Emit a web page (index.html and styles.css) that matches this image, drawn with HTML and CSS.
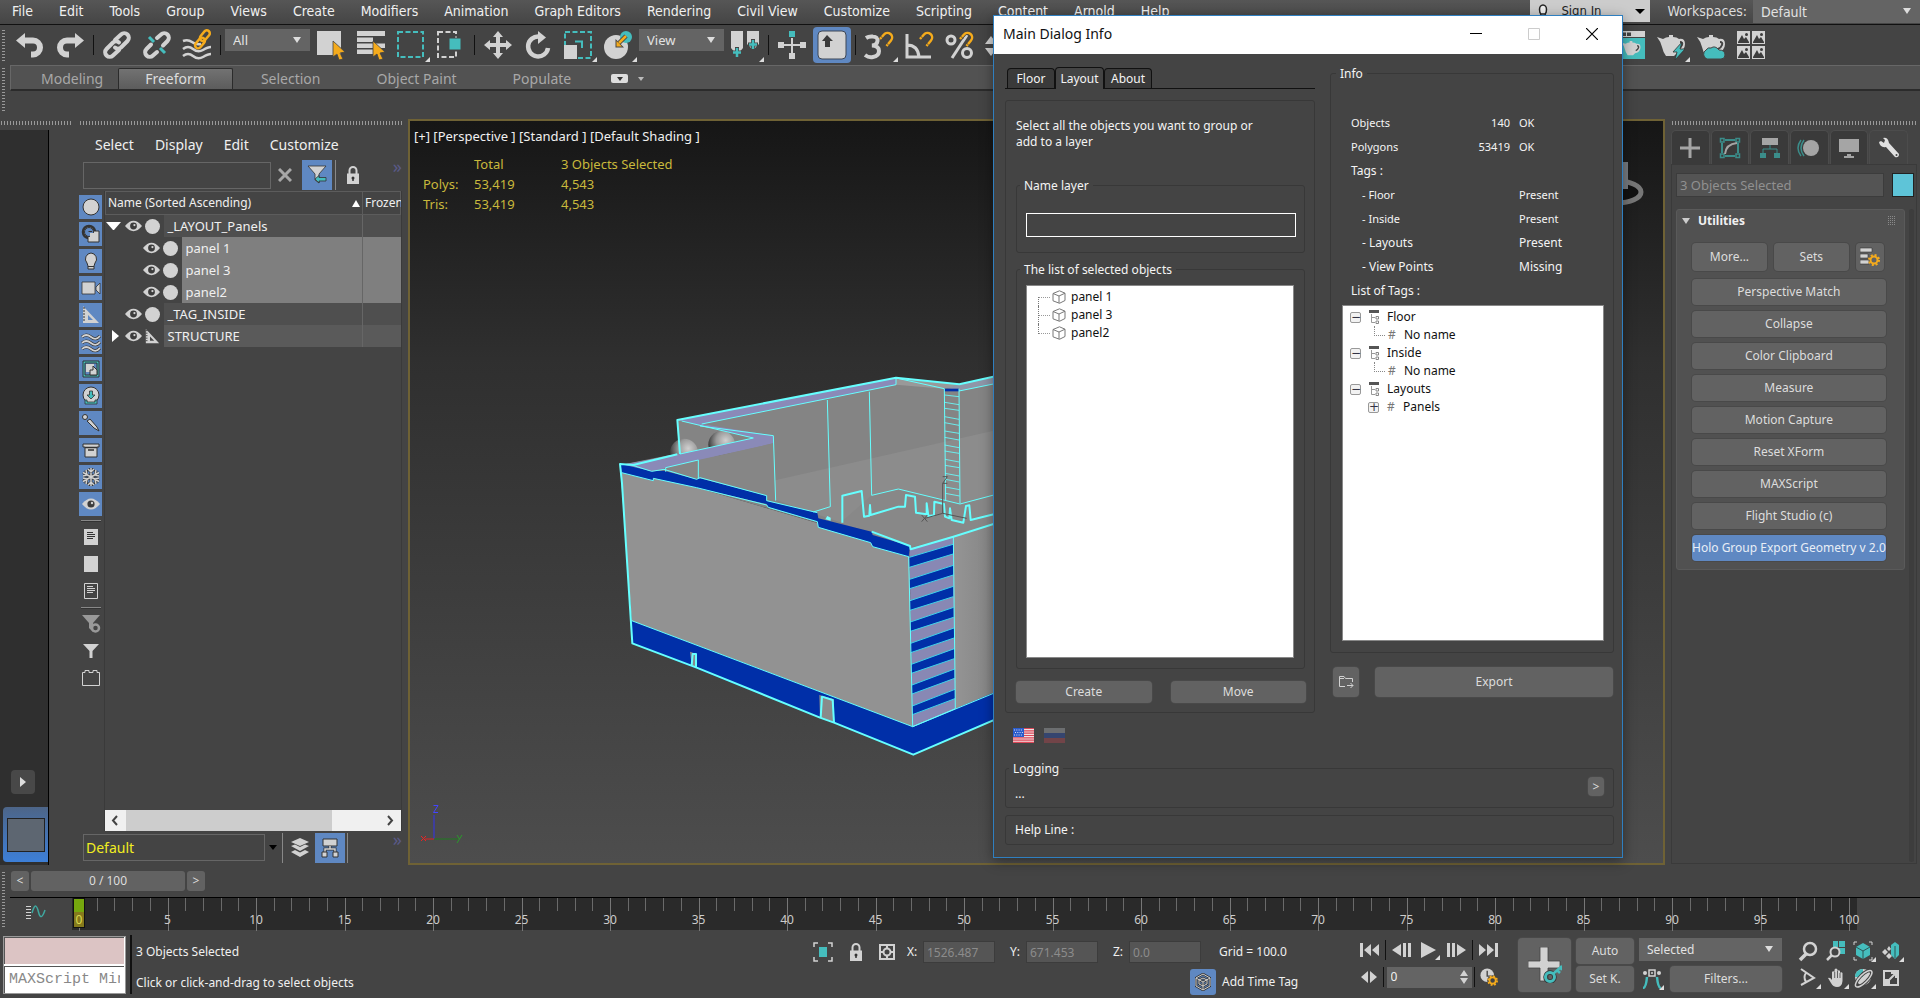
FILE: index.html
```html
<!DOCTYPE html>
<html lang="en">
<head>
<meta charset="utf-8">
<title>3D Scene Editor</title>
<link rel="stylesheet" href="styles.css">
</head>
<body>
<svg class="defs" aria-hidden="true">
  <defs>
    <symbol id="eye" viewBox="0 0 18 12"><path d="M0 6Q9-5 18 6Q9 17 0 6Z" fill="#d2d2d2"/><circle cx="9" cy="6" r="3.6" fill="#3c3c3c"/><circle cx="10" cy="5" r="1.2" fill="#d2d2d2"/></symbol>
    <symbol id="disc" viewBox="0 0 14 14"><circle cx="7" cy="7" r="7" fill="#d2d2d2"/></symbol>
    <symbol id="ruler" viewBox="0 0 18 18"><path fill-rule="evenodd" d="M1 0L17 17H1ZM6 9V14H11Z" fill="#d2d2d2"/><path d="M1 2H3M1 5H3M1 8H3M1 11H3M1 14H3" stroke="#333"/></symbol>
    <symbol id="cube" viewBox="0 0 14 14"><path d="M1 3.500L7.500 .8L13 3.200V10.500L7.500 13.300L1 10.800ZM1 3.500L7 6L13 3.200M7 6V13" fill="none" stroke="#777"/></symbol>
    <symbol id="tag" viewBox="0 0 12 14"><path d="M1 0H11V3H1Z" fill="#555"/><path d="M3.500 4V12.500H7M3.500 7.500H7" fill="none" stroke="#999"/><path d="M8 6.500H10.500V9H8ZM8 11H10.500V13.500H8Z" fill="none" stroke="#888"/></symbol>
    <symbol id="teapot" viewBox="0 0 28 28"><path d="M0 5L6 7Q9 5 12 5V3H16V5Q20 5 22 7Q28 6 28 12Q28 19 20 21L17 24H9Q6 20 5 15Q4 10 0 5Z" fill="#d2d2d2"/><path d="M23 10Q26 10 25 13T21 17" fill="none" stroke="#444" stroke-width="2"/></symbol>
    <symbol id="pic" viewBox="0 0 13 13"><path d="M0 0H13V13H0Z" fill="#d2d2d2"/><path d="M1 11L5 4L7 8L9 6L12 11V12H1Z" fill="#3c3c3c"/><circle cx="9.500" cy="3.500" r="1.500" fill="#3c3c3c"/></symbol>
    <symbol id="lock" viewBox="0 0 12 18"><path d="M2.500 8V4.500a3.500 3.500 0 0 1 7 0V8" fill="none" stroke="#d2d2d2" stroke-width="2"/><path d="M0 7.500H12V18H0Z" fill="#d2d2d2"/><circle cx="6" cy="12" r="1.500" fill="#333"/><path d="M6 12V15" stroke="#333" stroke-width="1.500"/></symbol>
    <symbol id="magnet" viewBox="0 0 16 16"><path d="M2 8L6 3.500a4.500 4.500 0 0 1 7 6L8.500 15" fill="none" stroke="#444" stroke-width="4"/><path d="M2 8L6 3.500a4.500 4.500 0 0 1 7 6L8.500 15" fill="none" stroke="#f5ab1c" stroke-width="2.500"/><path d="M2.500 5L5.500 8M8 11.500L11 14.500" stroke="#444" stroke-width=".8"/></symbol>
    <symbol id="gear" viewBox="0 0 12 12"><circle cx="6" cy="6" r="3.500" fill="none" stroke="#f5ab1c" stroke-width="2"/><circle cx="6" cy="6" r="5" fill="none" stroke="#f5ab1c" stroke-width="2" stroke-dasharray="2 1.930"/></symbol>
  </defs>
</svg>

<header class="menubar">
  <nav class="menus">
    <button>File</button><button>Edit</button><button>Tools</button><button>Group</button><button>Views</button><button>Create</button><button>Modifiers</button><button>Animation</button><button>Graph Editors</button><button>Rendering</button><button>Civil View</button><button>Customize</button><button>Scripting</button><button>Content</button><button>Arnold</button><button>Help</button>
  </nav>
  <button class="signin"><svg width="10" height="18" viewBox="0 0 10 18"><path d="M5 3a3.500 4.500 0 0 1 3.500 4.500Q8.500 11 7 12H3Q1.500 11 1.500 7.500A3.500 4.500 0 0 1 5 3ZM3 12L1 17H9L7 12" fill="#eee" stroke="#222" stroke-width="1.500"/></svg>Sign In<i class="caret"></i></button>
  <label class="ws" for="ws">Workspaces:</label>
  <span class="combo ws-combo"><select id="ws"><option>Default</option></select></span>
</header>

<div class="toolbar">
  <i class="grip"></i>
  <button aria-label="Undo"><svg viewBox="0 0 28 28"><path d="M0 9.500L9 2V17Z" fill="#d2d2d2"/><path d="M8 9.500H17a7 7 0 0 1 0 14H15" fill="none" stroke="#d2d2d2" stroke-width="6"/></svg></button>
  <button aria-label="Redo"><svg viewBox="0 0 28 28"><path d="M28 9.500L19 2V17Z" fill="#d2d2d2"/><path d="M20 9.500H11a7 7 0 0 0 0 14H13" fill="none" stroke="#d2d2d2" stroke-width="6"/></svg></button>
  <i class="sep"></i>
  <button aria-label="Link"><svg viewBox="0 0 28 28"><g fill="none" stroke="#d2d2d2" stroke-width="4" stroke-linecap="round"><path d="M12 9L18 3.500a4.500 4.500 0 0 1 6.500 6.500L18 16.500a4.500 4.500 0 0 1-6 0"/><path d="M16 19L10 24.500a4.500 4.500 0 0 1-6.500-6.500L10 11.500a4.500 4.500 0 0 1 6 0"/></g></svg></button>
  <button aria-label="Unlink"><svg viewBox="0 0 28 28"><g fill="none" stroke="#d2d2d2" stroke-width="4" stroke-linecap="round"><path d="M14 7L18 3.500a4.500 4.500 0 0 1 6.500 6.500L20 14.500"/><path d="M14 21L10 24.500a4.500 4.500 0 0 1-6.500-6.500L8 13.500"/></g><path d="M6 6L11 11M17 17L22 22" stroke="#45bdbd" stroke-width="3"/></svg></button>
  <button aria-label="Bind to space warp"><svg viewBox="0 0 28 28"><g fill="none" stroke="#d2d2d2" stroke-width="2.500"><path d="M0 10Q5 8 9 11T18 13M0 18Q5 14 10 18T20 19T28 16M0 25Q5 21 10 25T20 26T28 23"/></g><g fill="none" stroke="#f5ab1c" stroke-width="2.500"><rect x="17" y="2" width="12" height="6" rx="3" transform="rotate(-50 22 6)"/><rect x="11" y="9" width="12" height="6" rx="3" transform="rotate(-50 17 12)"/></g></svg></button>
  <i class="sep"></i>
  <span class="combo tool-combo"><select aria-label="Selection filter"><option>All</option></select></span>
  <button aria-label="Select object"><svg viewBox="0 0 28 28"><path d="M0 0H24V24H0Z" fill="#d2d2d2"/><path d="M16 10L28 21L23 22L26 28L22 29L20 23L16 26Z" fill="#f5ab1c" stroke="#444" stroke-width=".8"/></svg></button>
  <button aria-label="Select by name"><svg viewBox="0 0 28 28"><path d="M0 0H28V5H0ZM0 6.500H16V11H0ZM0 12.500H28V17H0ZM0 18.500H17V23H0Z" fill="#d2d2d2"/><path d="M16 10L28 21L23 22L26 28L22 29L20 23L16 26Z" fill="#f5ab1c" stroke="#444" stroke-width=".8"/></svg></button>
  <button class="fly" aria-label="Rectangular region"><svg viewBox="0 0 28 28"><path d="M1 1H26V26H1Z" fill="none" stroke="#45bdbd" stroke-width="2" stroke-dasharray="5 2.500"/></svg></button>
  <button aria-label="Window crossing"><svg viewBox="0 0 28 28"><path d="M1 1H19V26H1Z" fill="none" stroke="#d2d2d2" stroke-width="2" stroke-dasharray="5 2.500"/><path d="M12 7H24V19H12Z" fill="#45bdbd" stroke="#444"/></svg></button>
  <i class="sep"></i>
  <button aria-label="Move"><svg viewBox="0 0 28 28"><path d="M14 0L19 6H16V12H22V9L28 14L22 19V16H16V22H19L14 28L9 22H12V16H6V19L0 14L6 9V12H12V6H9Z" fill="#d2d2d2"/></svg></button>
  <button aria-label="Rotate"><svg viewBox="0 0 28 28"><path d="M15 5.500A10 10 0 1 0 24 17" fill="none" stroke="#d2d2d2" stroke-width="4.500"/><path d="M14 0L22 6.500L14 13Z" fill="#d2d2d2"/></svg></button>
  <button class="fly" aria-label="Scale"><svg viewBox="0 0 28 28"><path d="M1 1H27V27H1Z" fill="none" stroke="#45bdbd" stroke-width="2" stroke-dasharray="5 2.500"/><path d="M0 14H13V28H0Z" fill="#d2d2d2"/><path d="M11 10.500H18V17" fill="none" stroke="#45bdbd" stroke-width="2"/></svg></button>
  <button class="fly" aria-label="Place"><svg viewBox="0 0 28 28"><circle cx="12" cy="16" r="12" fill="#d2d2d2"/><circle cx="22" cy="6" r="6" fill="#45bdbd"/><path d="M22 5L15 12" stroke="#444" stroke-width="4.500"/><path d="M11.500 8V16.500H20Z" fill="#444"/><path d="M22 5L15 12" stroke="#f5ab1c" stroke-width="2.500"/><path d="M12.500 10V15.500H18Z" fill="#f5ab1c"/></svg></button>
  <span class="combo tool-combo"><select aria-label="Coordinate system"><option>View</option></select></span>
  <button class="fly" aria-label="Pivot center"><svg viewBox="0 0 28 28"><path d="M0 0H12V17L6 24L0 17ZM16 0H28V13L22 19L16 13Z" fill="#d2d2d2"/><path d="M6 16V27M1 21.500H11M22 8V19M17 13.500H27" stroke="#444" stroke-width="4"/><path d="M6 17V26M2 21.500H10M22 9V18M18 13.500H26" stroke="#45bdbd" stroke-width="2.500"/></svg></button>
  <i class="sep"></i>
  <button aria-label="Manipulate"><svg viewBox="0 0 28 28"><path d="M14 7V22M5 14H23" stroke="#d2d2d2" stroke-width="2"/><path d="M0 11H6V17H0ZM22 11H28V17H22ZM11 22H17V28H11Z" fill="#d2d2d2"/><path d="M11 0H17V6H11Z" fill="#45bdbd"/></svg></button>
  <button class="on" aria-label="Keyboard override"><svg viewBox="0 0 28 28"><rect x="0" y="0" width="28" height="28" rx="4" fill="#d2d2d2" stroke="#3c4656"/><path d="M9 4L15 10H12V16H7V10H4Z" fill="#3a3a3a"/></svg></button>
  <i class="sep"></i>
  <button class="fly" aria-label="Snap 3D"><svg viewBox="0 0 28 28"><path d="M1 7Q4 5 8 5.500Q13 6 12.500 10Q12 14 7 14.500Q14 15 14 20T8 26Q4 27 0 24" fill="none" stroke="#d2d2d2" stroke-width="4"/><use href="#magnet" x="13" y="0" width="16" height="16"/></svg></button>
  <button aria-label="Angle snap"><svg viewBox="0 0 28 28"><path d="M2 3V26H26M2 14Q13 14 14 26" fill="none" stroke="#d2d2d2" stroke-width="3"/><use href="#magnet" x="13" y="0" width="16" height="16"/></svg></button>
  <button aria-label="Percent snap"><svg viewBox="0 0 28 28"><g fill="none" stroke="#d2d2d2" stroke-width="3"><circle cx="6" cy="9" r="4"/><circle cx="22" cy="22" r="4.500"/><path d="M22 4L7 27"/></g><use href="#magnet" x="13" y="0" width="16" height="16"/></svg></button>
  <button aria-label="Spinner snap"><svg viewBox="0 0 28 28"><path d="M0 13L6 5L12 13ZM0 17L6 25L12 17Z" fill="#d2d2d2"/></svg></button>
  <div class="render-tools">
    <button aria-label="Rendered frame"><svg viewBox="0 0 28 28"><path d="M0 0H28V6H0Z" fill="#d2d2d2"/><path d="M5 1.500H9V5H5ZM10 1.500H14V5H10Z" fill="#444"/><path d="M0 7H28V28H0Z" fill="#45bdbd"/><use href="#teapot" x="1" y="8" width="26" height="19"/></svg></button>
    <button class="fly" aria-label="Render"><svg viewBox="0 0 28 28"><use href="#teapot" y="1" width="28" height="28"/><path d="M25 11L16 21H20L18 29L28 18H23Z" fill="#45bdbd" stroke="#333" stroke-width=".8"/></svg></button>
    <button aria-label="Cloud render"><svg viewBox="0 0 28 28"><use href="#teapot" y="1" width="28" height="28"/><path d="M10 28a5 5 0 0 1-1-9Q11 16 14 17Q18 14 22 19Q28 19 28 24Q28 28 24 28Z" fill="#45bdbd" stroke="#444"/></svg></button>
    <button aria-label="Gallery"><svg viewBox="0 0 28 28"><use href="#pic" width="13" height="13"/><use href="#pic" x="15" width="13" height="13"/><use href="#pic" y="15" width="13" height="13"/><use href="#pic" x="15" y="15" width="13" height="13"/></svg></button>
  </div>
</div>

<div class="ribbon">
  <i class="grip"></i>
  <nav class="ribbon-tabs">
    <button class="first">Modeling</button><button class="active">Freeform</button><button>Selection</button><button>Object Paint</button><button>Populate</button>
    <button class="mini" aria-label="Minimize ribbon"><span class="mini-box"><i class="caret"></i></span><i class="caret light"></i></button>
  </nav>
</div>

<main class="work">
  <aside class="dock">
    <i class="hgrip"></i>
    <div class="dock-body">
      <button class="play-btn" aria-label="Expand"><i class="tri-right"></i></button>
      <button class="layout-btn" aria-label="Viewport layout"><span></span></button>
    </div>
  </aside>

  <section class="explorer">
    <i class="hgrip"></i>
    <nav class="ex-menus"><button>Select</button><button>Display</button><button>Edit</button><button>Customize</button></nav>
    <div class="ex-search">
      <input type="text" aria-label="Search">
      <button class="clear" aria-label="Clear"><svg width="14" height="14" viewBox="0 0 14 14"><path d="M1 1L13 13M13 1L1 13" stroke="#a8a8a8" stroke-width="3"/></svg></button>
      <button class="blue" aria-label="Filter"><svg width="20" height="20" viewBox="0 0 20 20"><path d="M1 1H19L12 9V18L8 15V9Z" fill="#d2d2d2" stroke="#333" stroke-width=".8"/><path d="M8 14L12 10.500V12.500H19V16H12V18Z" fill="#45bdbd" stroke="#333" stroke-width=".8"/></svg></button>
      <i class="vline"></i>
      <svg class="lock" width="12" height="18"><use href="#lock"/></svg>
      <span class="more">»</span>
    </div>
    <div class="ex-body">
      <div class="ex-icons">
        <button aria-label="Geometry"><svg viewBox="0 0 18 18"><circle cx="9" cy="9" r="8" fill="#d2d2d2" stroke="#333"/></svg></button>
        <button aria-label="Shapes"><svg viewBox="0 0 18 18"><circle cx="7" cy="7" r="6" fill="#d2d2d2" stroke="#333" stroke-width="2.500"/><path d="M6 6H17V17H6Z" fill="#d2d2d2" stroke="#333"/><circle cx="7" cy="7" r="4.500" fill="#5f88c2" stroke="#333"/><path d="M8 8H15V15H8Z" fill="#d2d2d2"/><path d="M6.500 6.500H10" stroke="#333"/></svg></button>
        <button aria-label="Lights"><svg viewBox="0 0 18 18"><path d="M9 1A6 6 0 0 1 13 11L12 14V17H6V14L5 11A6 6 0 0 1 9 1Z" fill="#d2d2d2" stroke="#333"/><path d="M6 14.500H12" stroke="#333"/></svg></button>
        <button aria-label="Cameras"><svg viewBox="0 0 18 18"><path d="M0 3H13V15H0ZM14 8L18 4V15L14 11Z" fill="#d2d2d2" stroke="#333" stroke-width=".8"/></svg></button>
        <button aria-label="Helpers"><svg viewBox="0 0 18 18"><use href="#ruler"/></svg></button>
        <button aria-label="Space warps"><svg viewBox="0 0 18 18"><g fill="none"><path d="M0 4Q4 0 9 4T18 3M0 10Q4 6 9 10T18 9M0 16Q4 12 9 16T18 15" stroke="#333" stroke-width="3"/><path d="M0 4Q4 0 9 4T18 3M0 10Q4 6 9 10T18 9M0 16Q4 12 9 16T18 15" stroke="#d2d2d2" stroke-width="1.700"/></g></svg></button>
        <button aria-label="Groups"><svg viewBox="0 0 18 18"><path d="M1 1H17V17H1Z" fill="#45bdbd" stroke="#333"/><path d="M3 3H15V15H3Z" fill="#5f88c2" stroke="#333"/><path d="M4 4H12V12H4Z" fill="#d2d2d2"/><path d="M8 10H11V6L15 10V15H8Z" fill="#d2d2d2" stroke="#333"/></svg></button>
        <button aria-label="XRefs"><svg viewBox="0 0 18 18"><circle cx="9" cy="8" r="8" fill="#d2d2d2" stroke="#333"/><path d="M7.500 4H10.500V8H13L9 12L5 8H7.500Z" fill="#45bdbd" stroke="#333" stroke-width=".8"/><path d="M3 13H5V15H13V13H15V17H3Z" fill="#45bdbd" stroke="#333" stroke-width=".8"/></svg></button>
        <button aria-label="Bones"><svg viewBox="0 0 18 18"><circle cx="3" cy="3" r="2.500" fill="#d2d2d2" stroke="#333"/><path d="M5 7L8 5L15 13L17 17L12 14Z" fill="#d2d2d2" stroke="#333"/></svg></button>
        <button aria-label="Containers"><svg viewBox="0 0 18 18"><path d="M1 3H17V6H15V16H3V6H1Z" fill="#d2d2d2" stroke="#333"/><path d="M3 6.500H15M6 9H12" stroke="#333" stroke-width="1.500"/></svg></button>
        <button aria-label="Frozen"><svg viewBox="0 0 18 18"><path d="M9 0V18M1 4.500L17 13.500M17 4.500L1 13.500M6 1L9 4L12 1M6 17L9 14L12 17M1 8L5 7L4 2M17 10L13 11L14 16M17 8L13 7L14 2M1 10L5 11L4 16" fill="none" stroke="#333" stroke-width="2.800"/><path d="M9 0V18M1 4.500L17 13.500M17 4.500L1 13.500M6 1L9 4L12 1M6 17L9 14L12 17M1 8L5 7L4 2M17 10L13 11L14 16M17 8L13 7L14 2M1 10L5 11L4 16" fill="none" stroke="#d2d2d2" stroke-width="1.500"/></svg></button>
        <button aria-label="Hidden"><svg viewBox="0 0 18 18"><use href="#eye" y="3" width="18" height="12"/></svg></button>
        <i class="hline"></i>
        <button class="plain" aria-label="All"><svg viewBox="0 0 18 18"><path d="M2 1H16V17H2Z" fill="#d2d2d2"/><path d="M5 4.500H11M5 6.500H13M5 8.500H13M5 10.500H11" stroke="#333"/></svg></button>
        <button class="plain" aria-label="None"><svg viewBox="0 0 18 18"><path d="M2 1H16V17H2Z" fill="#d2d2d2"/></svg></button>
        <button class="plain" aria-label="Invert"><svg viewBox="0 0 18 18"><path d="M2.500 1.500H15.500V16.500H2.500Z" fill="none" stroke="#d2d2d2"/><path d="M5 4.500H11M5 6.500H13M5 8.500H13M5 10.500H11" stroke="#d2d2d2"/></svg></button>
        <i class="hline"></i>
        <button class="plain" aria-label="Filter settings"><svg viewBox="0 0 18 18"><path d="M0 0H18L11 8V17L7 13V8Z" fill="#999"/><circle cx="13.500" cy="13" r="3.500" fill="#444" stroke="#999" stroke-width="2.500"/></svg></button>
        <button class="plain" aria-label="Filter"><svg viewBox="0 0 18 18"><path d="M1 2H17L10.500 9V16H7.500V9Z" fill="#d2d2d2"/></svg></button>
        <button class="plain" aria-label="Brick"><svg viewBox="0 0 18 18"><path d="M.5 3.500H3V1.500H7V3.500H11V1.500H15V3.500H17.500V16.500H.5Z" fill="none" stroke="#d2d2d2"/></svg></button>
      </div>
      <div class="ex-tree">
        <table>
          <thead><tr><th class="c-name"><span class="th">Name (Sorted Ascending)<i class="tri-up"></i></span></th><th class="c-frozen">Frozen</th></tr></thead>
          <tbody>
            <tr class="r-open"><td><span class="node"><i class="ex-down"></i><svg class="eye"><use href="#eye"/></svg><svg class="obj"><use href="#disc"/></svg><span class="lbl">_LAYOUT_Panels</span></span></td><td></td></tr>
            <tr class="r-sel"><td><span class="node child"><svg class="eye"><use href="#eye"/></svg><svg class="obj"><use href="#disc"/></svg><span class="lbl">panel 1</span></span></td><td></td></tr>
            <tr class="r-sel"><td><span class="node child"><svg class="eye"><use href="#eye"/></svg><svg class="obj"><use href="#disc"/></svg><span class="lbl">panel 3</span></span></td><td></td></tr>
            <tr class="r-sel"><td><span class="node child"><svg class="eye"><use href="#eye"/></svg><svg class="obj"><use href="#disc"/></svg><span class="lbl">panel2</span></span></td><td></td></tr>
            <tr class="r-open"><td><span class="node"><i class="ex-none"></i><svg class="eye"><use href="#eye"/></svg><svg class="obj"><use href="#disc"/></svg><span class="lbl">_TAG_INSIDE</span></span></td><td></td></tr>
            <tr class="r-alt"><td><span class="node"><i class="ex-right"></i><svg class="eye"><use href="#eye"/></svg><svg class="obj"><use href="#ruler"/></svg><span class="lbl">STRUCTURE</span></span></td><td></td></tr>
          </tbody>
        </table>
        <div class="hscroll"><svg width="21" height="21" viewBox="0 0 21 21"><path d="M12 6L8 10.500L12 15" fill="none" stroke="#444" stroke-width="2"/></svg><span></span><svg width="21" height="21" viewBox="0 0 21 21"><path d="M8 6L12 10.500L8 15" fill="none" stroke="#444" stroke-width="2"/></svg></div>
      </div>
    </div>
    <div class="ex-foot">
      <input type="text" value="Default" aria-label="Layer">
      <i class="caret"></i>
      <i class="vline"></i>
      <button aria-label="Layers"><svg width="18" height="20" viewBox="0 0 18 20"><path d="M9 0L18 4L9 8L0 4ZM0 8L4 6.500L9 9L14 6.500L18 8L9 13ZM0 14L4 12L9 14.500L14 12L18 14L9 19Z" fill="#d2d2d2"/></svg></button>
      <button class="blue" aria-label="Hierarchy"><svg width="18" height="20" viewBox="0 0 18 20"><path d="M2 1H16V8H2Z" fill="#d2d2d2" stroke="#333"/><path d="M9 8V11M4 15V11H14V15" fill="none" stroke="#333" stroke-width="3"/><path d="M9 8V11M4 15V11H14V15" fill="none" stroke="#d2d2d2" stroke-width="1.500"/><path d="M1 14H6V19H1ZM12 14H17V19H12Z" fill="#d2d2d2" stroke="#333"/></svg></button>
      <i class="vline"></i>
      <span class="more">»</span>
    </div>
  </section>

  <section class="viewport">
    <p class="vp-label">[+] [Perspective ] [Standard ] [Default Shading ]</p>
    <table class="stats">
      <tr><td></td><td>Total</td><td>3 Objects Selected</td></tr>
      <tr><td>Polys:</td><td>53,419</td><td>4,543</td></tr>
      <tr><td>Tris:</td><td>53,419</td><td>4,543</td></tr>
    </table>
    <svg class="scene" viewBox="0 0 1200 1260">
      <defs>
        <radialGradient id="ball" cx=".65" cy=".35" r=".7"><stop offset="0" stop-color="#d0d0d0"/><stop offset=".5" stop-color="#9a9a9a"/><stop offset="1" stop-color="#303030"/></radialGradient>
        <linearGradient id="wall" x1="0" x2="1"><stop offset="0" stop-color="#959595"/><stop offset="1" stop-color="#828282"/></linearGradient>
      </defs>
      <path d="M232 210L888 83L1078 103L1200 78V540L930 600L60 345L236 310Z" fill="#848484"/>
      <path d="M420 415L1200 238V530L930 590L500 440Z" fill="#8c8c8c"/>
      <path d="M725 515L815 436L895 417L1080 462L1200 432V520L930 592Z" fill="#888"/>
      <circle cx="252" cy="308" r="42" fill="url(#ball)"/><circle cx="365" cy="283" r="40" fill="url(#ball)"/>
      <path d="M232 210L888 84V104L305 222L520 257V280L155 364L62 345L240 312L460 264Z" fill="#8a8ab8"/>
      <path d="M197 353L295 330L520 280L527 452L290 390Z" fill="#868686"/>
      <path d="M1033 112L1078 103L1200 78V98L1078 123Z" fill="#8f96a8"/>
      <path d="M888 84L1078 103L1033 116L888 104Z" fill="#999"/>
      <path d="M60 345L928 600L938 1130L95 812Z" fill="#929292"/>
      <path d="M1060 562L1200 516V1022L1066 1078Z" fill="url(#wall)"/>
      <path d="M928 596L1060 560L1066 1078L938 1130Z" fill="#8888b4"/>
      <g fill="#002fa8">
        <path d="M62 342L155 364L192 362L290 388L300 385L500 437V452L652 488L655 505L815 545L818 555L930 588L926 620L818 590L812 578L655 532L652 515L505 472L500 462L290 413L160 385V392L65 368Z"/>
        <path d="M95 812L938 1130L1066 1076L1200 1020V1102L940 1214L97 880Z"/>
        <path d="M928 622L1059 583V612L928 652ZM929 688L1060 646V675L929 716ZM930 752L1060 709V740L930 781ZM931 816L1061 772V802L931 844ZM932 880L1062 834V864L932 908ZM934 943L1063 896V926L934 970ZM936 1005L1064 957V985L936 1032ZM937 1068L1065 1018V1046L937 1094Z"/>
        <path d="M1033 116H1077V124H1033Z"/>
      </g>
      <path d="M270 905L290 912V952L275 946ZM658 1035L702 1048V1118L660 1103Z" fill="#8a8a8a"/>
      <g fill="none" stroke="#6ff" stroke-width="3" stroke-linejoin="round">
        <path d="M928 622L1059 583M928 652L1059 612M929 688L1060 646M929 716L1060 675M930 752L1060 709M930 781L1060 740M931 816L1061 772M931 844L1061 802M932 880L1062 834M932 908L1062 864M934 943L1063 896M934 970L1063 926M936 1005L1064 957M936 1032L1064 985M937 1068L1065 1018M937 1094L1065 1046" stroke="#3fd3e8"/>
        <path d="M245 213L460 264L240 312M300 228L520 257L527 452M305 222L888 104V84M682 150L691 470L640 486M808 125L815 436L895 417L1080 462L1200 430M888 84L1033 116M197 365V353L295 330V385M1033 116L1037 450M1077 116L1080 460M1077 123L1200 98"/>
        <path d="M1034 135L1077 140M1034 157L1077 164M1034 175L1077 181M1034 200L1077 208M1034 218L1077 226M1034 243L1077 250M1034 262L1077 270M1034 285L1077 293M1034 303L1077 310M1035 328L1078 336M1035 346L1078 353M1035 370L1078 378M1036 388L1078 396M1036 411L1079 419M1036 430L1079 438" stroke-width="2.500"/>
        <path d="M65 368L160 392V385L290 413L500 465L505 472L652 515L655 532L812 578L818 590L926 620L938 1130L95 812M938 1130L1066 1076L1060 560M938 1130L1200 1022M95 345L155 364L192 358L290 388L300 383L500 437V452L652 488"/>
        <g stroke-width="6"><path d="M240 312L232 210L888 83L1078 103L1200 76M232 313L100 345L60 342L66 400L97 880L272 946L288 952L660 1103L702 1118L940 1214L1200 1102M275 946L278 912L288 912V952M662 1103L666 1040L698 1050L702 1118M815 545L930 588L932 598L1060 560L1200 516"/>
        <path d="M727 518V437L785 423L792 500L808 497L810 465L812 495L895 470H915L918 435L945 440L948 488L980 493V460L985 498L1002 496L1003 455L1032 462L1035 500L1048 505L1050 475L1055 510L1090 518L1098 468L1108 466L1112 510L1200 488"/></g>
      </g>
      <path d="M682 498L692 503V512L676 508Z" fill="#7ff"/>
      <path d="M1028 380H1042L1028 400H1042M1028 400V490M965 495L982 515M982 495L965 515M975 505L1028 490L1100 505" fill="none" stroke="#555" stroke-width="3"/>
    </svg>
    <svg class="axis" viewBox="0 0 46 42"><path d="M14 10V34" stroke="#33e"/><path d="M14 34H38" stroke="#1f7a1f"/><path d="M14 34H5" stroke="#d22"/><path d="M13.500 .5H18L13.500 7.500H18" stroke="#44f" fill="none"/><path d="M1 31L6 36M6 31L1 36" stroke="#e22"/><path d="M37 30L39.500 34L42 30M39.500 34L37 38" stroke="#2a9a2a" fill="none"/></svg>
    <svg class="viewcube" viewBox="0 0 60 50"><ellipse cx="33" cy="31" rx="24" ry="11" fill="#111" stroke="#777" stroke-width="5"/><path d="M20 1H44V28H20Z" fill="#777c82"/></svg>
  </section>

  <aside class="command">
    <i class="hgrip"></i>
    <div class="cmd-tabs">
      <button aria-label="Create"><svg viewBox="0 0 20 20"><path d="M0 8.500H8.500V0H11.500V8.500H20V11.500H11.500V20H8.500V11.500H0Z" fill="#a5a5a5"/></svg></button>
      <button aria-label="Modify"><svg viewBox="0 0 20 20"><path d="M2 5V15M18 5V15M5 2H15M5 18H15" stroke="#3b8d8a" stroke-width="2"/><path d="M.5 .5H4V4H.5ZM16 .5H19.500V4H16ZM.5 16H4V19.500H.5ZM16 16H19.500V19.500H16Z" fill="none" stroke="#3b8d8a" stroke-width="1.500"/><path d="M5 16Q6 6 17 5" fill="none" stroke="#a5a5a5" stroke-width="2"/></svg></button>
      <button aria-label="Hierarchy"><svg viewBox="0 0 20 20"><path d="M2 0H18V7H2Z" fill="#a5a5a5"/><path d="M10 7V11M3 15V11H17V15" fill="none" stroke="#3b8d8a"/><path d="M0 15H6V20H0ZM14 15H20V20H14Z" fill="#3b8d8a"/></svg></button>
      <button aria-label="Motion"><svg viewBox="0 0 20 20"><circle cx="12" cy="10" r="8" fill="#a5a5a5"/><path d="M5 2Q-1 10 5 18M2 2Q-4 10 2 18" fill="none" stroke="#3b8d8a" stroke-width="1.500"/></svg></button>
      <button aria-label="Display"><svg viewBox="0 0 20 20"><path d="M0 1H20V14H0ZM8 16H12V18H15V20H5V18H8Z" fill="#a5a5a5"/></svg></button>
      <button class="active" aria-label="Utilities"><svg viewBox="0 0 20 20"><path d="M2 3L5 5L6 2L4 0Q9-1 10 5L20 16Q20 20 16 19L7 9Q1 10 0 4Z" fill="#e0e0e0"/><circle cx="17.500" cy="17" r="1" fill="#444"/></svg></button>
    </div>
    <div class="cmd-body">
      <div class="cmd-name"><input type="text" value="3 Objects Selected" aria-label="Object name"><button class="swatch" aria-label="Object color"></button></div>
      <div class="roll-row">
        <section class="rollout">
          <h2><i class="caret light big"></i>Utilities<i class="dots"></i></h2>
          <div class="three"><button class="btn">More...</button><button class="btn">Sets</button><button class="btn" aria-label="Configure"><svg width="20" height="20" viewBox="0 0 20 20"><path d="M0 1H12V5H0ZM0 7H8V11H0ZM0 13H9V17H0Z" fill="#d2d2d2" stroke="#333" stroke-width=".6"/><use href="#gear" x="8" y="7" width="12" height="12"/></svg></button></div>
          <button class="btn">Perspective Match</button>
          <button class="btn">Collapse</button>
          <button class="btn">Color Clipboard</button>
          <button class="btn">Measure</button>
          <button class="btn">Motion Capture</button>
          <button class="btn">Reset XForm</button>
          <button class="btn">MAXScript</button>
          <button class="btn">Flight Studio (c)</button>
          <button class="btn selected">Holo Group Export Geometry v 2.0</button>
        </section>
        <i class="vtrack"></i>
      </div>
    </div>
  </aside>
</main>

<section class="time">
  <i class="grip"></i>
  <div class="time-main">
    <div class="slider"><button>&lt;</button><button class="frame">0 / 100</button><button>&gt;</button></div>
    <div class="track">
      <button class="curve" aria-label="Mini curve editor"><svg width="20" height="14" viewBox="0 0 20 14"><path d="M0 1.500H5M0 4.500H5M0 7.500H5M0 10.500H5M0 13.500H5" stroke="#d2d2d2"/><path d="M6 8C9-3 11 1 12.500 7S16 14 19 5" fill="none" stroke="#3fa8a0" stroke-width="1.500"/></svg></button>
      <ol class="scale">
        <li><b class="now">0</b><i></i><i></i><i></i><i></i><i></i></li><li><b>5</b><i></i><i></i><i></i><i></i><i></i></li><li><b>10</b><i></i><i></i><i></i><i></i><i></i></li><li><b>15</b><i></i><i></i><i></i><i></i><i></i></li><li><b>20</b><i></i><i></i><i></i><i></i><i></i></li><li><b>25</b><i></i><i></i><i></i><i></i><i></i></li><li><b>30</b><i></i><i></i><i></i><i></i><i></i></li><li><b>35</b><i></i><i></i><i></i><i></i><i></i></li><li><b>40</b><i></i><i></i><i></i><i></i><i></i></li><li><b>45</b><i></i><i></i><i></i><i></i><i></i></li><li><b>50</b><i></i><i></i><i></i><i></i><i></i></li><li><b>55</b><i></i><i></i><i></i><i></i><i></i></li><li><b>60</b><i></i><i></i><i></i><i></i><i></i></li><li><b>65</b><i></i><i></i><i></i><i></i><i></i></li><li><b>70</b><i></i><i></i><i></i><i></i><i></i></li><li><b>75</b><i></i><i></i><i></i><i></i><i></i></li><li><b>80</b><i></i><i></i><i></i><i></i><i></i></li><li><b>85</b><i></i><i></i><i></i><i></i><i></i></li><li><b>90</b><i></i><i></i><i></i><i></i><i></i></li><li><b>95</b><i></i><i></i><i></i><i></i><i></i></li><li class="last"><b>100</b><i></i></li>
      </ol>
    </div>
  </div>
</section>

<footer class="status">
  <div class="listener"><input type="text" class="pink" aria-label="Macro recorder"><input type="text" placeholder="MAXScript Mini Listener" aria-label="Script listener"></div>
  <div class="prompts"><p>3 Objects Selected</p><p>Click or click-and-drag to select objects</p></div>
  <div class="coords">
    <div class="coord-row">
      <svg width="20" height="20" viewBox="0 0 20 20"><path d="M1 5V1H5M15 1H19V5M19 15V19H15M5 19H1V15" fill="none" stroke="#d2d2d2" stroke-width="1.500"/><path d="M6 5H14V15H6Z" fill="#45bdbd"/></svg>
      <svg width="12" height="18"><use href="#lock"/></svg>
      <svg width="16" height="16" viewBox="0 0 16 16"><path d="M1 1H15V15H1Z" fill="none" stroke="#d2d2d2" stroke-width="2"/><circle cx="8" cy="8" r="3.500" fill="none" stroke="#d2d2d2" stroke-width="2"/><path d="M8 1V5M8 11V15M1 8H4M12 8H15" stroke="#d2d2d2" stroke-width="2"/></svg>
      <label>X:<input type="text" value="1526.487"></label>
      <label>Y:<input type="text" value="671.453"></label>
      <label>Z:<input type="text" value="0.0"></label>
      <span class="grid-size">Grid = 100.0</span>
    </div>
    <div class="tag-row"><button class="tag-btn" aria-label="Time tag"><svg width="16" height="18" viewBox="0 0 16 18"><path d="M8 1L15 5V13L8 17L1 13V5ZM1 5L8 9L15 5M8 9V17M4 7V11L8 13L12 11V7L8 5Z" fill="none" stroke="#333" stroke-width="2.500"/><path d="M8 1L15 5V13L8 17L1 13V5ZM1 5L8 9L15 5M8 9V17M4 7V11L8 13L12 11V7L8 5Z" fill="none" stroke="#d2d2d2"/></svg></button><span>Add Time Tag</span></div>
  </div>
  <div class="playback">
    <div class="pb-row">
      <button aria-label="Go to start"><svg viewBox="0 0 20 16"><path d="M1 1H4V15H1ZM12 2V14L5 8ZM20 2V14L13 8Z" fill="#d2d2d2"/></svg></button><i class="sep"></i>
      <button aria-label="Previous frame"><svg viewBox="0 0 20 16"><path d="M10 2V14L1 8ZM12 1H15V15H12ZM17 1H20V15H17Z" fill="#d2d2d2"/></svg></button>
      <button class="fly" aria-label="Play"><svg viewBox="0 0 20 16"><path d="M2 0L17 8L2 16Z" fill="#d2d2d2"/></svg></button>
      <button aria-label="Next frame"><svg viewBox="0 0 20 16"><path d="M10 2V14L19 8ZM0 1H3V15H0ZM5 1H8V15H5Z" fill="#d2d2d2"/></svg></button><i class="sep"></i>
      <button aria-label="Go to end"><svg viewBox="0 0 20 16"><path d="M16 1H19V15H16ZM0 2V14L7 8ZM8 2V14L15 8Z" fill="#d2d2d2"/></svg></button>
    </div>
    <div class="pb-row">
      <button aria-label="Key mode"><svg viewBox="0 0 20 16"><path d="M9 2V14L2 8ZM11 2V14L18 8Z" fill="#d2d2d2"/></svg></button><i class="sep"></i>
      <span class="spin"><input type="text" value="0" aria-label="Current frame"><svg width="8" height="14" viewBox="0 0 8 14"><path d="M0 6L4 0L8 6ZM0 8L4 14L8 8Z" fill="#d2d2d2"/></svg></span><i class="sep"></i>
      <button aria-label="Time configuration"><svg viewBox="0 0 20 20"><circle cx="8" cy="8" r="7.500" fill="#d2d2d2"/><path d="M8 3V9H12" fill="none" stroke="#444" stroke-width="1.500"/><circle cx="14" cy="14" r="6" fill="#444"/><use href="#gear" x="8" y="8" width="12" height="12"/></svg></button>
    </div>
  </div>
  <button class="btn bigkey" aria-label="Set keys"><svg width="34" height="36" viewBox="0 0 34 36"><path d="M0 14H12V0H20V14H32V21H20V34H12V21H0Z" fill="#d2d2d2" stroke="#444" stroke-width=".8"/><circle cx="22" cy="30" r="4.500" fill="none" stroke="#333" stroke-width="4.500"/><circle cx="22" cy="30" r="4.500" fill="none" stroke="#45bdbd" stroke-width="3"/><path d="M25 27L34 19M29 23L32 26M32 20L34 23" stroke="#45bdbd" stroke-width="2.500"/></svg></button>
  <div class="keys"><button class="btn">Auto</button><button class="btn">Set K.</button></div>
  <div class="filters">
    <span class="combo"><select aria-label="Key set"><option>Selected</option></select></span>
    <div class="filter-row"><button class="icon fly" aria-label="Tangents"><svg width="20" height="20" viewBox="0 0 20 20"><path d="M1 19Q4 19 5 8M19 19Q16 19 15 8" fill="none" stroke="#45bdbd" stroke-width="2.500"/><path d="M7 1H13V7H7Z" fill="none" stroke="#d2d2d2" stroke-width="1.500"/><circle cx="10" cy="4" r="1" fill="#d2d2d2"/><circle cx="3" cy="4" r="2" fill="#d2d2d2"/><circle cx="17" cy="4" r="2" fill="#d2d2d2"/></svg></button><button class="btn">Filters...</button></div>
  </div>
  <div class="nav">
    <button aria-label="Zoom"><svg viewBox="0 0 20 20"><circle cx="12" cy="8" r="6" fill="none" stroke="#d2d2d2" stroke-width="2.500"/><path d="M8 13L2 19" stroke="#d2d2d2" stroke-width="3.500"/></svg></button>
    <button aria-label="Zoom all"><svg viewBox="0 0 20 20"><path d="M7 0H12V6H7ZM13 0H19V6H13ZM13 7H19V13H13Z" fill="#45bdbd"/><circle cx="9" cy="11" r="4.500" fill="#444" stroke="#d2d2d2" stroke-width="2"/><path d="M6 14L1 19" stroke="#d2d2d2" stroke-width="2.500"/></svg></button>
    <button class="fly" aria-label="Zoom extents"><svg viewBox="0 0 20 20"><path d="M1 4V1H4M16 1H19V4M4 19H1V16M16 19H19V16" fill="none" stroke="#d2d2d2"/><path d="M10 2L17 6V14L10 18L3 14V6Z" fill="#45bdbd"/><path d="M3 6L10 10L17 6M10 10V18" fill="none" stroke="#2c5555"/></svg></button>
    <button class="fly" aria-label="Extents all"><svg viewBox="0 0 20 20"><path d="M10 4L14 1L18 4V14L14 18L10 14Z" fill="#45bdbd"/><path d="M14 5V17" stroke="#2c5555"/><path d="M4 8L7 11L4 14L1 11ZM8 12L11 15L8 18L5 15ZM8 5L10 8L8 10L6 8Z" fill="#d2d2d2"/></svg></button>
    <button class="fly" aria-label="Field of view"><svg viewBox="0 0 20 20"><path d="M3 1L16 10L3 17M8 5Q5 9 8 14" fill="none" stroke="#d2d2d2" stroke-width="2"/></svg></button>
    <button class="fly" aria-label="Pan"><svg viewBox="0 0 20 20"><path d="M6 12V4a1.500 1.500 0 0 1 2.500 0V2a1.500 1.500 0 0 1 3 0V3a1.500 1.500 0 0 1 2.500 0V5a1.500 1.500 0 0 1 2.500 0V13Q16 19 11 19Q7 19 5 15L2 10Q4 9 6 12Z" fill="#d2d2d2"/><path d="M8.700 4V10M11.500 3V10M14 5V10" stroke="#444" stroke-width=".8"/></svg></button>
    <button class="fly" aria-label="Orbit"><svg viewBox="0 0 20 20"><circle cx="10" cy="9" r="8" fill="#d2d2d2"/><path d="M10 9V1A8 8 0 0 0 2 9Z" fill="#45bdbd"/><ellipse cx="10" cy="11" rx="11" ry="4" transform="rotate(-45 10 10)" fill="none" stroke="#444" stroke-width="3.500"/><ellipse cx="10" cy="11" rx="11" ry="4" transform="rotate(-45 10 10)" fill="none" stroke="#d2d2d2" stroke-width="1.500"/></svg></button>
    <button aria-label="Maximize viewport"><svg viewBox="0 0 20 20"><path d="M2 2H18V18H2Z" fill="#d2d2d2"/><path d="M4 4H16V16H9V11H4Z" fill="#444"/><path d="M8 12L15 5M10 5H15V10" fill="none" stroke="#d2d2d2" stroke-width="2"/></svg></button>
  </div>
</footer>

<section class="dialog" role="dialog" aria-label="Main Dialog Info">
  <header><h1>Main Dialog Info</h1>
    <button aria-label="Minimize"><svg width="12" height="12"><path d="M0 5.500H12" stroke="#000"/></svg></button>
    <button aria-label="Maximize" disabled><svg width="12" height="12"><path d="M.5 .5H11.500V11.500H.5Z" stroke="#ccc" fill="none"/></svg></button>
    <button aria-label="Close"><svg width="12" height="12"><path d="M0 0L12 12M12 0L0 12" stroke="#000" stroke-width="1.200"/></svg></button>
  </header>
  <div class="dlg-cols">
    <div class="dlg-left">
      <nav class="tabs"><button>Floor</button><button class="active">Layout</button><button>About</button></nav>
      <div class="panel">
        <p>Select all the objects you want to group or<br>add to a layer</p>
        <fieldset class="fs-name"><legend><label for="layer">Name layer</label></legend><input id="layer" type="text"></fieldset>
        <fieldset class="fs-list"><legend>The list of selected objects</legend>
          <ul class="box"><li><svg width="14" height="14"><use href="#cube"/></svg>panel 1</li><li><svg width="14" height="14"><use href="#cube"/></svg>panel 3</li><li><svg width="14" height="14"><use href="#cube"/></svg>panel2</li></ul>
        </fieldset>
        <div class="pair"><button class="btn">Create</button><button class="btn">Move</button></div>
      </div>
    </div>
    <div class="dlg-right">
      <fieldset class="fs-info"><legend>Info</legend>
        <table>
          <tr class="small"><td>Objects</td><td class="num">140</td><td>OK</td></tr>
          <tr class="small"><td>Polygons</td><td class="num">53419</td><td>OK</td></tr>
          <tr><td>Tags :</td><td></td><td></td></tr>
          <tr class="small sub"><td>- Floor</td><td></td><td>Present</td></tr>
          <tr class="small sub"><td>- Inside</td><td></td><td>Present</td></tr>
          <tr class="sub"><td>- Layouts</td><td></td><td>Present</td></tr>
          <tr class="sub"><td>- View Points</td><td></td><td>Missing</td></tr>
          <tr><td>List of Tags :</td><td></td><td></td></tr>
        </table>
        <ul class="box tags">
          <li><i class="pm">−</i><svg width="12" height="14"><use href="#tag"/></svg>Floor</li>
          <li class="leaf"><i class="elbow"></i><span>#</span>No name</li>
          <li><i class="pm">−</i><svg width="12" height="14"><use href="#tag"/></svg>Inside</li>
          <li class="leaf"><i class="elbow"></i><span>#</span>No name</li>
          <li class="end"><i class="pm">−</i><svg width="12" height="14"><use href="#tag"/></svg>Layouts</li>
          <li class="leaf plus"><i class="pm">+</i><span>#</span>Panels</li>
        </ul>
      </fieldset>
      <div class="export-row"><button class="btn" aria-label="Choose folder"><svg width="16" height="14" viewBox="0 0 16 14"><path d="M7 11.500H1.500V1.500H6L7.500 3.500H14.500V7M9 10.500H15M12.500 8L15 10.500L12.500 13M1.500 3.500H6" fill="none" stroke="#d2d2d2"/></svg></button><button class="btn">Export</button></div>
    </div>
  </div>
  <div class="flags">
    <button aria-label="English"><svg width="21" height="15" viewBox="0 0 21 15"><path d="M0 0H21V15H0Z" fill="#f3dfe0"/><path d="M0 .5H21M0 2.800H21M0 5.100H21M0 7.500H21M0 9.800H21M0 12.100H21M0 14.400H21" stroke="#dc4858" stroke-width="1.200"/><path d="M0 0H11V9H0Z" fill="#2a5ccc"/><path d="M1 2H10M2 4.500H10M1 7H10" stroke="#dde" stroke-dasharray="1 1.300"/></svg></button>
    <button aria-label="Russian"><svg width="21" height="15" viewBox="0 0 21 15"><path d="M0 0H21V5H0Z" fill="#6c6e70"/><path d="M0 5H21V10H0Z" fill="#35456f"/><path d="M0 10H21V15H0Z" fill="#724448"/></svg></button>
  </div>
  <fieldset class="fs-log"><legend>Logging</legend><span>...</span><button class="btn">&gt;</button></fieldset>
  <div class="help">Help Line :</div>
</section>
</body>
</html>
```
FILE: styles.css
```css
* { box-sizing: border-box; margin: 0; padding: 0; }
html, body { height: 100%; }
body {
  display: flex; flex-direction: column; overflow: hidden; position: relative;
  background: #444; color: #f0f0f0;
  font: 12px/16px "Noto Sans", sans-serif;
  white-space: nowrap;
}
button, input, select { font: inherit; color: inherit; background: none; border: 0; }
button { display: flex; align-items: center; justify-content: center; }
ul, ol { list-style: none; }
.defs { position: absolute; width: 0; height: 0; }
svg { display: block; flex: none; }
i, b { font-style: normal; font-weight: normal; }

.caret { width: 0; height: 0; border: 4px solid transparent; border-top: 5px solid #000; border-bottom: 0; }
.caret.light { border-top-color: #ccc; }
.caret.big { border-top-width: 6px; }
.grip { flex: none; width: 3px; background: radial-gradient(circle, #999 0 1px, transparent 1px) 0 0 / 2px 3px; }
.hgrip { flex: none; display: block; height: 4px; margin-top: 2px; background: radial-gradient(circle, #999 0 1px, transparent 1px) 0 0 / 3px 2px; }
.btn { background: #626262; border-radius: 4px; color: #ddd; box-shadow: 0 0 0 1px #494949; overflow: hidden; }

.combo { position: relative; display: block; background: #646464; color: #e2e2e2; }
.combo select { appearance: none; width: 100%; height: 100%; padding-left: 8px; }
.combo::after { content: ""; position: absolute; right: 9px; top: 8px; border: 4px solid transparent; border-top: 6px solid #ddd; border-bottom: 0; pointer-events: none; }

.fly { position: relative; }
.fly::after { content: ""; position: absolute; right: 1px; bottom: 2px; border: 3px solid transparent; border-right-color: #ddd; border-bottom-color: #ddd; border-width: 2px 2px 3px 3px; }

.menubar { flex: none; display: flex; height: 25px; background: linear-gradient(#565656, #454545); border-bottom: 1px solid #111; font: 14px/16px "DejaVu Sans Condensed", "Noto Sans", sans-serif; }
.menus { display: flex; gap: 26px; padding-left: 12px; flex: 1; height: 22px; }
.signin { background: #ccc; color: #222; width: 120px; height: 22px; padding: 0 5px 0 8px; gap: 13px; font-size: 13px; }
.signin .caret { margin-left: auto; border-width: 5px 5px 0; }
.ws { padding: 0 6px 0 17px; line-height: 23px; color: #ddd; }
.ws-combo { width: 167px; height: 23px; }

.toolbar { flex: none; display: flex; align-items: center; height: 40px; padding-right: 149px; }
.toolbar .grip { height: 33px; margin: 0 5px 0 2px; }
.toolbar button { width: 40px; height: 38px; flex: none; }
.toolbar button svg { width: 28px; height: 28px; overflow: visible; }
.toolbar button.on { width: 38px; height: 36px; margin: 0 1px; background: #5f88c2; border-radius: 4px; }
.toolbar .sep { width: 1px; height: 20px; margin: 0 3px; background: #111; }
.tool-combo { width: 85px; height: 22px; margin: 0 1px 10px; font-size: 13px; }
.render-tools { display: flex; margin-left: auto; }

.ribbon { flex: none; display: flex; height: 54px; }
.ribbon .grip { height: 46px; margin: 2px 5px 0 2px; }
.ribbon-tabs { flex: 1; display: flex; align-items: flex-end; height: 26px; background: #525252; border: 1px solid #676767; border-width: 1px 0 0 1px; border-bottom: 2px solid #2b2b2b; font-size: 14px; }
.ribbon-tabs button { height: 21px; padding: 0 28px; color: #a8a8a8; }
.ribbon-tabs .first { padding: 0 15px 0 30px; }
.ribbon-tabs .active { background: linear-gradient(#727272, #5c5c5c); color: #ddd; border: 1px solid #2b2b2b; border-bottom: 0; padding: 0 26px; border-radius: 2px 2px 0 0; }
.ribbon-tabs .mini { padding: 0 12px; gap: 10px; }
.ribbon-tabs .caret { border-width: 4px 3px 0; border-top-color: #333; }
.ribbon-tabs .caret.light { border-top-color: #bbb; }
.mini-box { width: 17px; height: 9px; background: #ddd; border-radius: 2px; display: flex; align-items: center; justify-content: center; }

.work { flex: 1; min-height: 0; display: flex; }
.dock { width: 73px; display: flex; flex-direction: column; }
.dock-body { flex: 1; width: 49px; margin-top: 5px; background: #2f2f2f; border-right: 1px solid #000; display: flex; flex-direction: column; justify-content: flex-end; padding: 0 0 3px 3px; gap: 13px; }
.play-btn { width: 24px; height: 24px; margin-left: 8px; background: #484848; border-radius: 4px; }
.tri-right { border: 5px solid transparent; border-left: 6px solid #ddd; border-right: 0; }
.layout-btn { height: 55px; background: linear-gradient(#4d6587, #3d7fd8); border-radius: 4px 0 0 4px; }
.layout-btn span { width: 38px; height: 34px; background: #5d6671; border: 1px solid #222; }

.explorer { width: 335px; padding: 0 6px 0 6px; display: flex; flex-direction: column; }
.ex-menus { display: flex; gap: 21px; padding: 9px 0 0 16px; height: 33px; font-size: 14px; }
.ex-menus button { height: 22px; }
.ex-search, .ex-foot { display: flex; align-items: center; height: 32px; padding-left: 4px; }
.ex-search { margin-top: 1px; }
.ex-search input { width: 188px; height: 27px; border: 1px solid #666; }
.clear { width: 28px; height: 30px; margin-right: 3px; }
.blue { width: 30px; height: 30px; background: #5f88c2; }
.vline { width: 1px; height: 30px; margin: 0 3px; background: #888; }
.ex-search .lock { margin-left: 8px; }
.more { margin: -18px 0 0 auto; color: #5a5a88; font-size: 18px; }
.ex-body { flex: 1; min-height: 0; display: flex; }
.ex-icons { width: 24px; padding-top: 4px; display: flex; flex-direction: column; gap: 3px; }
.ex-icons button { width: 23px; height: 24px; background: #5f88c2; }
.ex-icons button svg { width: 18px; height: 18px; overflow: visible; }
.ex-icons .plain { background: none; }
.hline { height: 2px; margin: 1px 2px 0; background: #888; border-bottom: 1px solid #333; }
.ex-tree { flex: 1; margin-left: 1px; border: 1px solid #3a3a3a; border-width: 0 1px; display: flex; flex-direction: column; min-width: 0; overflow: hidden; }
.ex-tree table { width: 100%; table-layout: fixed; border-collapse: collapse; font-size: 13px; }
.ex-tree th { height: 23px; font-weight: normal; font-size: 12px; text-align: left; border: 1px solid #5c5c5c; padding-left: 2px; }
.th { display: flex; align-items: center; justify-content: space-between; padding-right: 2px; }
.c-frozen { width: 38px; }
.tri-up { border: 4px solid transparent; border-bottom: 7px solid #fff; border-top: 0; }
.ex-tree td { height: 22px; border-right: 1px solid #666; }
.ex-tree td:last-child { border-right: 0; }
.node { display: flex; align-items: center; height: 22px; }
.node.child { margin-left: 18px; padding-left: 19px; }
.eye { width: 17px; height: 12px; margin-right: 3px; }
.node .obj { width: 15px; height: 15px; margin-right: 4px; }
.lbl { flex: 1; height: 22px; line-height: 23px; padding-left: 4px; }
.ex-down { width: 15px; margin-right: 4px; border: 7px solid transparent; border-top: 8px solid #fff; border-bottom: 0; }
.ex-none { width: 15px; margin-right: 4px; }
.ex-right { margin: 0 6px 0 6px; border: 6px solid transparent; border-left: 7px solid #fff; border-right: 0; }
.r-open .lbl, .r-open td:last-child { background: #4f4f4f; }
.r-sel .lbl, .r-sel td:last-child { background: #7f7f7f; }
.r-alt .lbl, .r-alt td:last-child { background: #5a5a5a; }
.hscroll { margin-top: auto; height: 21px; display: flex; background: #f0f0f0; }
.hscroll span { width: 206px; background: #cdcdcd; margin-right: auto; }
.ex-foot { height: 34px; padding-bottom: 1px; }
.ex-foot input { width: 182px; height: 27px; border: 1px solid #666; color: #f2ee20; font-size: 14px; padding-left: 2px; }
.ex-foot .caret { margin: 0 3px 0 4px; }
.ex-foot .vline { margin: 0 2px; }
.ex-foot button { width: 30px; height: 30px; }

.viewport { flex: 1; min-width: 0; position: relative; overflow: hidden; border: 2px solid #6f6235; background: linear-gradient(#161616, #2f2f2f 32%, #4d4d4d); padding: 7px 4px; font-size: 13px; }
.stats { margin: 10px 0 0 9px; color: #c9b93c; border-collapse: collapse; }
.stats td { height: 20px; }
.stats td:first-child { width: 51px; }
.stats td:nth-child(2) { width: 87px; }
.scene { position: absolute; left: 190px; top: 229px; width: 400px; height: 420px; }
.axis { position: absolute; left: 10px; bottom: 16px; width: 46px; height: 42px; }
.viewcube { position: absolute; right: 19px; top: 40px; width: 60px; height: 50px; }

.command { width: 255px; padding: 0 3px 1px 6px; display: flex; flex-direction: column; }
.cmd-tabs { display: flex; height: 41px; margin-top: 5px; padding-right: 8px; }
.cmd-tabs button { flex: 1; height: 34px; background: #3a3a3a; border: 1px solid #4c4c4c; border-bottom: 0; border-radius: 5px 5px 0 0; margin-right: 1px; }
.cmd-tabs button.active { background: #444; }
.cmd-tabs svg { width: 20px; height: 20px; overflow: visible; }
.cmd-body { flex: 1; margin-top: -7px; border: 1px solid #3a3a3a; padding: 8px 2px 0 4px; }
.cmd-name { display: flex; gap: 8px; }
.cmd-name input { flex: 1; height: 24px; background: #545454; border: 1px solid #3c3c3c; color: #909090; padding-left: 3px; font-size: 13px; }
.swatch { width: 22px; height: 24px; background: #5ec4d8; border: 1px solid #222; }
.roll-row { display: flex; margin-top: 12px; height: calc(100% - 37px); }
.rollout { flex: 1; align-self: flex-start; background: #515151; border: 1px solid #5a5a5a; border-radius: 3px; padding: 2px 18px 8px 15px; display: flex; flex-direction: column; gap: 6px; }
.rollout h2 { display: flex; align-items: center; gap: 8px; height: 17px; margin: 0 -10px 8px; font-size: 12px; }
.dots { margin-left: auto; width: 9px; height: 9px; background: conic-gradient(#8a8a8a 25%, transparent 0 50%, transparent 0) 0 0 / 2px 2px; }
.rollout .btn { height: 26px; }
.three { display: grid; grid-template-columns: 1fr 1fr 28px; gap: 7px; margin: 0 2px 2px 0; }
.three .btn { height: 28px; }
.rollout .selected { background: #5f88c2; color: #e8eef6; }
.vtrack { width: 7px; margin-left: 4px; background: #3d3d3d; border-radius: 3px; }

.time { flex: none; display: flex; height: 66px; padding-top: 6px; }
.time .grip { height: 58px; margin: 0 5px 0 2px; }
.time-main { flex: 1; }
.slider { display: flex; gap: 2px; height: 26px; padding: 0 0 6px 1px; }
.slider button { width: 18px; background: #626262; border-radius: 3px; color: #ddd; }
.slider .frame { width: 154px; }
.track { display: flex; border-top: 1px solid #000; height: 34px; padding-right: 63px; }
.curve { width: 62px; padding: 0 10px 6px 0; }
.scale { flex: 1; display: flex; background: #2a2a2a; padding: 0 7px; color: #ccc; margin-bottom: 1px; }
.scale li { flex: 1; display: flex; position: relative; }
.scale li i { flex: 1; height: 13px; border-left: 1px solid #6a6a6a; }
.scale li i:nth-child(2) { height: 33px; border-left-color: #777; }
.scale li.last { flex: none; width: 1px; }
.scale b { position: absolute; left: -15px; width: 30px; top: 14px; text-align: center; }
.scale .now { top: 0; left: -6px; width: 12px; padding-top: 13px; height: 30px; color: #d8d850; background: linear-gradient(#76a80e 0 13px, #857a1c 13px); border: 1px solid #111; }

.status { flex: none; display: flex; height: 67px; padding: 4px 15px 4px 3px; }
.listener { width: 123px; height: 58px; margin-top: 1px; background: #fff; display: grid; grid-template-rows: 1fr 1fr; gap: 2px; border: 1px solid #999; font-family: "Liberation Mono", monospace; font-size: 15px; }
.listener input { border-top: 1px solid #555; border-left: 1px solid #555; padding: 0 4px; min-width: 0; margin-right: 1px; }
.listener input::placeholder { color: #888; }
.listener .pink { background: #dcc4c4; }
.prompts { flex: 1; border-left: 2px solid #111; margin-left: 4px; padding: 9px 0 0 4px; }
.prompts p + p { margin-top: 15px; }
.coords { width: 532px; margin-right: 12px; }
.coord-row { display: flex; align-items: center; height: 22px; margin-top: 6px; }
.coord-row svg { margin-right: 17px; }
.coord-row svg:nth-child(3) { margin-right: 12px; }
.coord-row label { display: flex; align-items: center; justify-content: space-between; width: 88px; margin-right: 15px; }
.coord-row input { width: 72px; height: 22px; background: #555; border: 1px solid #3c3c3c; color: #8c8c8c; padding-left: 3px; }
.grid-size { margin-left: 3px; }
.tag-row { display: flex; align-items: center; gap: 6px; margin: 6px 0 0 377px; }
.tag-btn { width: 26px; height: 26px; background: #5f88c2; border-radius: 3px; }
.playback { width: 144px; margin-right: 17px; padding-top: 4px; display: flex; flex-direction: column; gap: 5px; }
.pb-row { display: flex; align-items: center; justify-content: space-between; height: 22px; }
.pb-row button { width: 24px; height: 24px; }
.pb-row button svg { width: 20px; height: 18px; }
.pb-row .sep { width: 1px; height: 20px; background: #111; }
.spin { display: flex; align-items: center; width: 85px; height: 21px; background: #646464; padding-right: 4px; }
.spin input { flex: 1; min-width: 0; padding-left: 4px; }
.bigkey { width: 53px; height: 54px; margin: 3px 5px 0 0; }
.keys { width: 58px; margin: 3px 5px 0 0; display: flex; flex-direction: column; gap: 2px; }
.keys .btn { height: 26px; }
.filters { width: 143px; margin: 3px 12px 0 0; display: flex; flex-direction: column; gap: 5px; }
.filters .combo { height: 23px; }
.filter-row { display: flex; gap: 5px; }
.filter-row .icon { width: 26px; }
.filter-row .btn { flex: 1; height: 26px; }
.nav { width: 111px; display: grid; grid-template-columns: repeat(4, 1fr); grid-auto-rows: 27px; padding-top: 2px; }
.nav svg { width: 20px; height: 20px; overflow: visible; }

.dialog { position: absolute; left: 993px; top: 15px; width: 630px; height: 843px; background: #444; color: #f4f4f4; border: 1px solid #2f7fc0; box-shadow: 0 3px 12px rgba(0, 0, 0, .4); display: flex; flex-direction: column; }
.dialog header { display: flex; align-items: center; height: 38px; background: #fff; color: #111; padding: 0 1px 2px 9px; flex: none; }
.dialog h1 { flex: 1; font: 14px/20px "Noto Sans", sans-serif; }
.dialog header button { width: 58px; height: 28px; }
.dlg-cols { display: flex; gap: 15px; padding: 13px 8px 0 11px; }
.dlg-left { width: 310px; }
.tabs { display: flex; align-items: flex-end; height: 22px; padding-left: 2px; border-bottom: 1px solid #111; }
.tabs button { width: 48px; height: 20px; background: #3a3a3a; border: 1px solid #111; border-bottom: 0; border-radius: 4px 4px 0 0; }
.tabs .active { height: 22px; width: 49px; background: #444; margin-bottom: -1px; }
.panel { margin-top: 11px; border: 1px solid #383838; border-radius: 3px; padding: 17px 9px 9px 10px; }
fieldset { border: 1px solid #383838; border-radius: 3px; min-width: 0; }
legend { margin-left: -6px; padding: 2px 4px 0; }
.fs-name { margin-top: 26px; height: 77px; padding: 19px 8px 0 9px; }
.fs-name input { width: 100%; height: 24px; border: 1px solid #fff; outline: 0; }
.fs-list { margin-top: 7px; padding: 7px 10px 10px 9px; }
.box { background: #fff; color: #111; border: 1px solid #888; height: 373px; padding: 2px 11px; }
.box li { display: flex; align-items: center; height: 18px; gap: 5px; }
.fs-list li { position: relative; padding-left: 14px; }
.fs-list li::before { content: ""; position: absolute; left: 0; top: 0; width: 12px; height: 100%; border-left: 1px dotted #777; background: linear-gradient(90deg, #999 1px, transparent 1px) 0 50% / 2px 1px repeat-x; }
.fs-list li:first-child::before { top: 9px; height: 9px; background-position: 0 0; }
.fs-list li:last-child::before { height: 10px; background-position: 0 100%; }
.pair { display: grid; grid-template-columns: 1fr 1fr; gap: 19px; margin-top: 12px; margin-right: -1px; }
.pair .btn { height: 22px; }
.dlg-right { flex: 1; margin-top: -3px; }
.fs-info { padding: 29px 9px 10px 11px; height: 589px; }
.fs-info table { width: 100%; table-layout: fixed; border-collapse: collapse; }
.fs-info td { height: 24px; padding-left: 9px; }
.fs-info td:first-child { width: 118px; }
.fs-info td:nth-child(2) { width: 50px; padding: 0; text-align: right; }
.fs-info .sub td:first-child { padding-left: 20px; }
.small { font-size: 11px; }
.tags { height: 336px; margin-top: 2px; padding: 2px 7px; }
.tags li { gap: 7px; }
.pm { width: 11px; height: 11px; border: 1px solid #999; border-radius: 2px; background: #f2f2f2; color: #334; font: 12px/9px "DejaVu Sans", sans-serif; text-align: center; }
.tags .leaf { padding-left: 18px; gap: 5px; }
.elbow { width: 11px; height: 10px; margin: -8px 0 0 6px; border: 1px dotted #888; border-width: 0 0 1px 1px; margin-right: -5px; }
.leaf span { width: 14px; color: #777; text-align: center; }
.plus { padding-left: 19px; }
.export-row { display: flex; gap: 16px; padding: 14px 1px 0 3px; }
.export-row .btn { height: 30px; width: 26px; }
.export-row .btn + .btn { flex: 1; }
.flags { display: flex; gap: 10px; padding: 15px 0 0 19px; }
.fs-log { margin: 16px 8px 0 11px; height: 49px; display: flex; padding: 0 9px; justify-content: space-between; }
.fs-log span { padding-top: 9px; }
.fs-log .btn { width: 16px; height: 19px; }
.help { margin: 7px 8px 0 11px; border: 1px solid #383838; border-radius: 3px; height: 30px; padding: 6px 9px; }
```
